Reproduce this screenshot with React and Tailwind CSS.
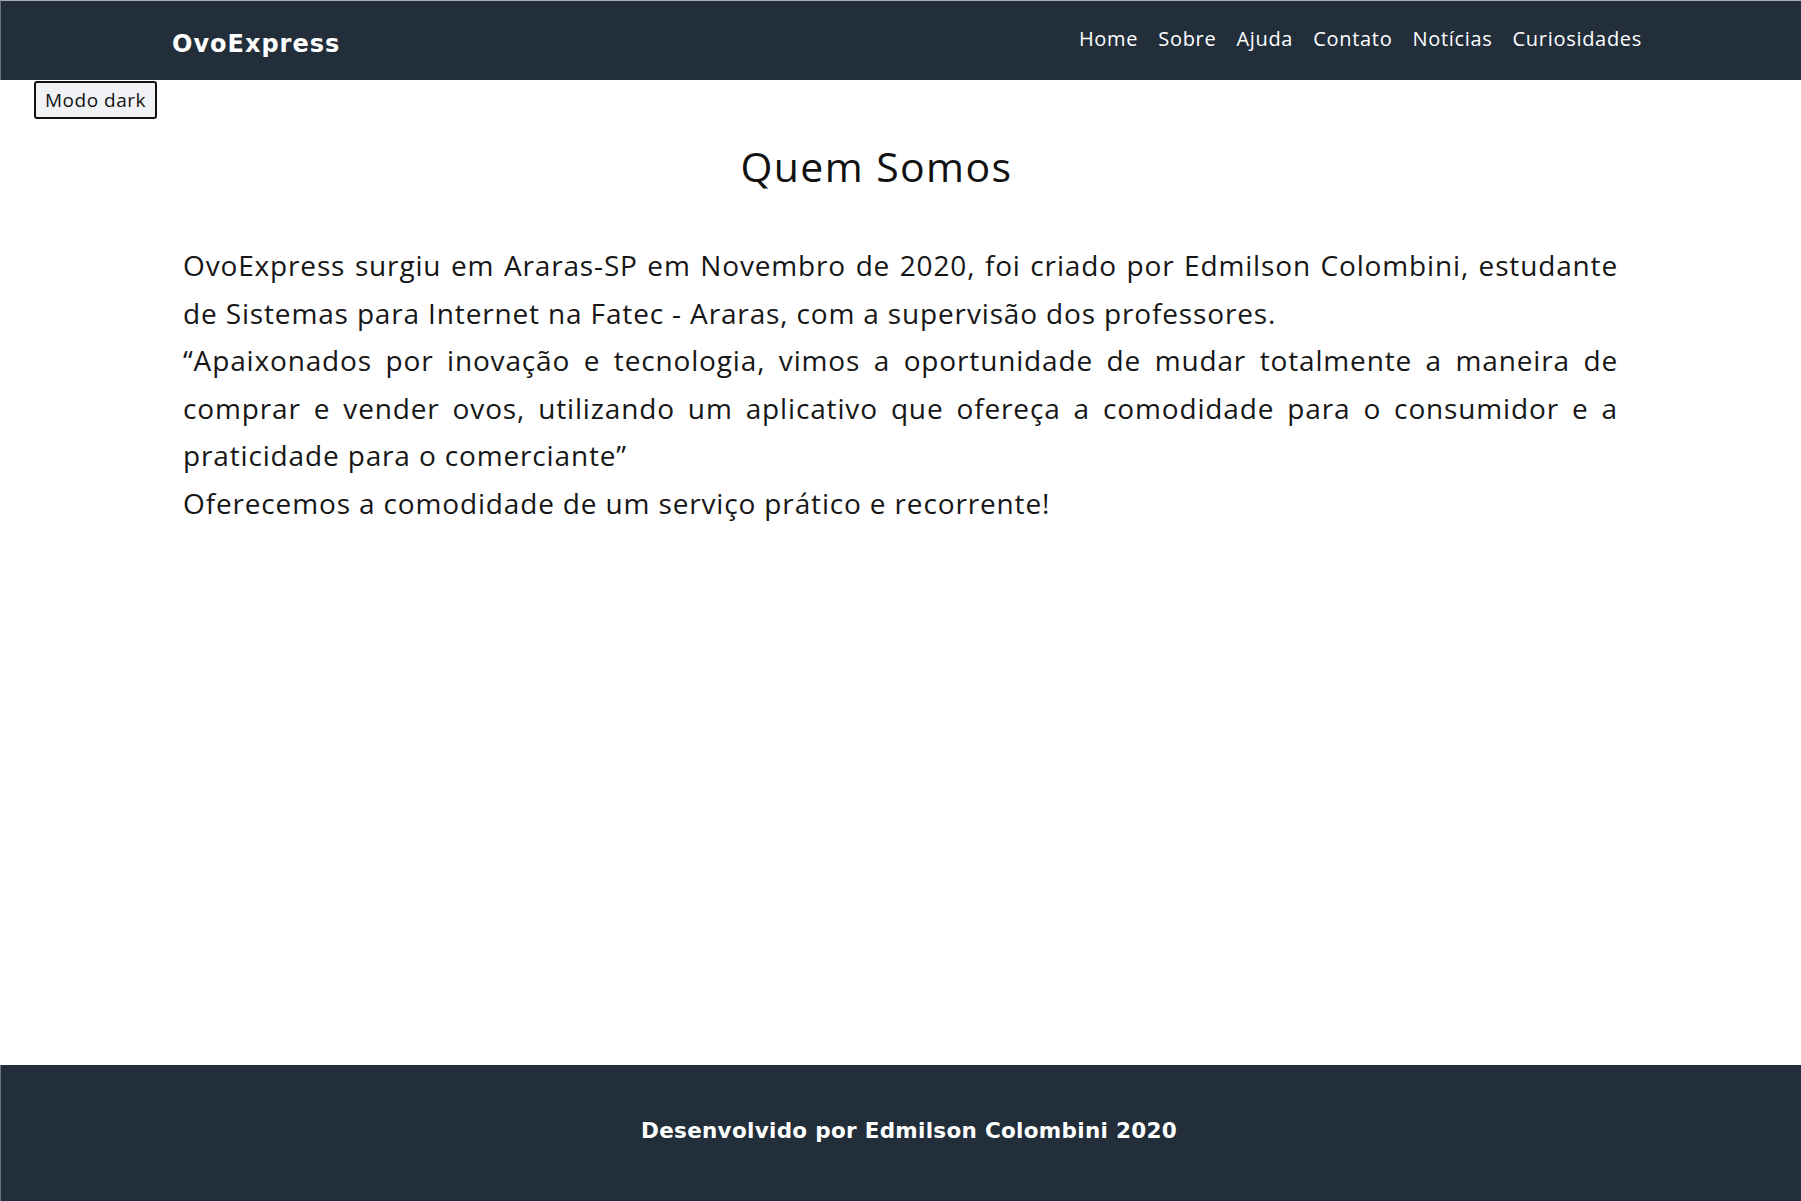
export default function App() {
  const nav = ["Home", "Sobre", "Ajuda", "Contato", "Notícias", "Curiosidades"];
  return (
    <div className="min-h-screen flex flex-col bg-white" style={{ fontFamily: "'Open Sans', 'Noto Sans', sans-serif" }}>
      <header className="h-[80px] shrink-0 bg-[#222f3b] border-t border-t-[#a9adb1] border-l border-l-[#6b737b] flex items-center justify-between pl-[171px] pr-[159px]">
        <div className="mt-[7px] text-white text-[24px] font-bold tracking-[1px] leading-none" style={{ fontFamily: "'DejaVu Sans', sans-serif" }}>
          OvoExpress
        </div>
        <nav className="flex items-center gap-[20px] mb-[3px]">
          {nav.map((n) => (
            <a key={n} className="text-white text-[20px] tracking-[0.7px] leading-none" href="#">
              {n}
            </a>
          ))}
        </nav>
      </header>
      <main className="flex-1 flex flex-col">
        <div className="pl-[34px]">
          <button className="mt-px w-[123px] h-[38px] border-2 border-[#111] rounded-[3px] bg-[#f0f2f5] text-[#111] text-[19px] tracking-[0.5px] leading-none flex items-center justify-center">
            Modo dark
          </button>
        </div>
        <h1 className="mt-[23px] pr-[48px] text-center text-[41px] tracking-[1.4px] leading-[49px] text-[#111]">Quem Somos</h1>
        <div className="mt-[51px] mx-auto w-[1435px] text-[28px] tracking-[0.85px] leading-[47.6px] text-[#161616] text-justify">
          <p>
            OvoExpress surgiu em Araras-SP em Novembro de 2020, foi criado por Edmilson Colombini, estudante de Sistemas para Internet na Fatec - Araras, com a supervisão dos professores.
          </p>
          <p>
            “Apaixonados por inovação e tecnologia, vimos a oportunidade de mudar totalmente a maneira de comprar e vender ovos, utilizando um aplicativo que ofereça a comodidade para o consumidor e a praticidade para o comerciante”
          </p>
          <p>Oferecemos a comodidade de um serviço prático e recorrente!</p>
        </div>
      </main>
      <footer className="h-[136px] shrink-0 bg-[#222f3b] border-l border-l-[#6b737b] flex items-center justify-center pl-[16px]">
        <p className="mb-[4px] text-white text-[21.5px] font-bold tracking-[0.3px] leading-none" style={{ fontFamily: "'DejaVu Sans', sans-serif" }}>
          Desenvolvido por Edmilson Colombini 2020
        </p>
      </footer>
    </div>
  );
}
